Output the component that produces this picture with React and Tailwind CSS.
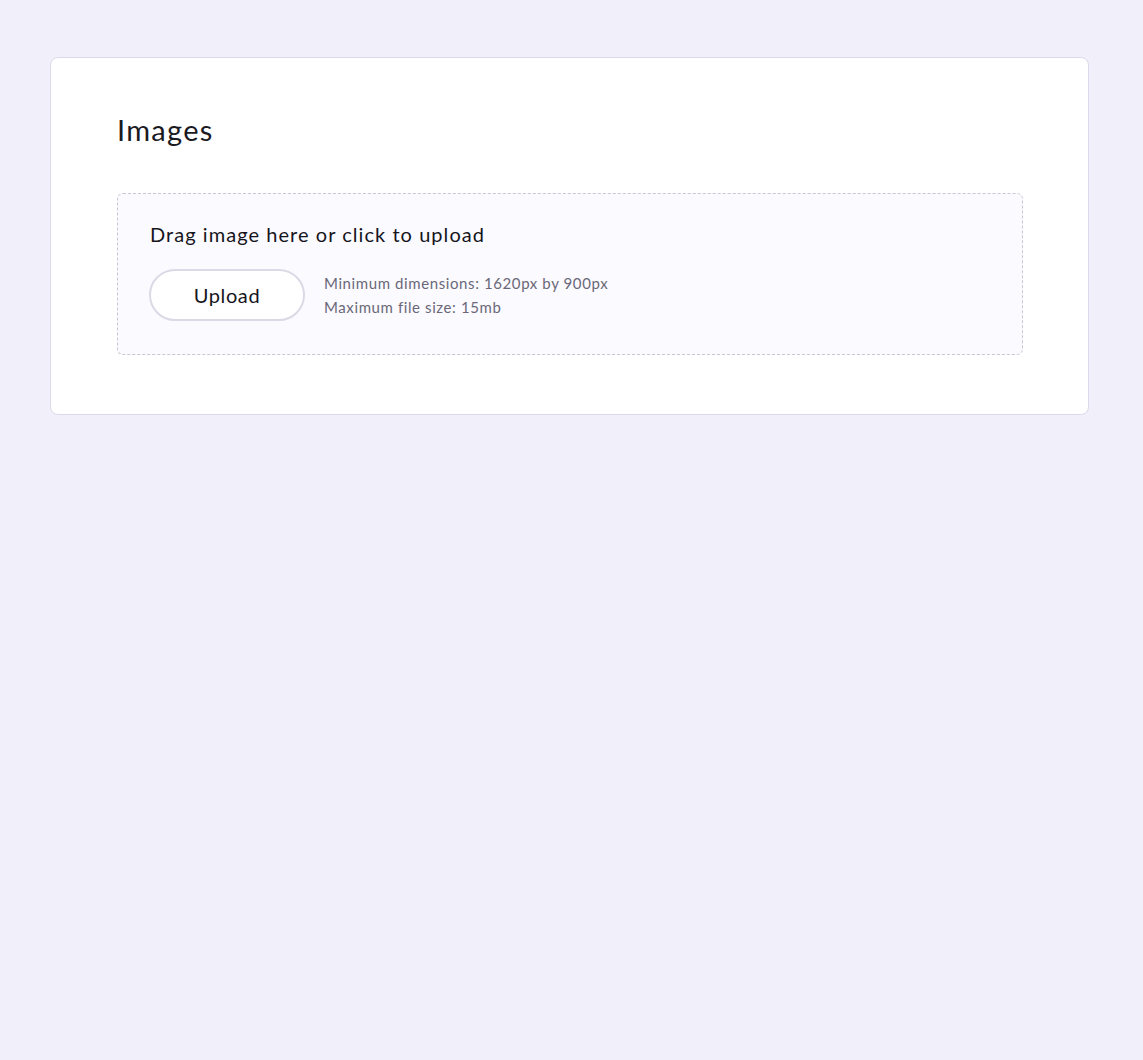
export default function App() {
  return (
    <div className="min-h-[1060px] w-full bg-[#f1effa] pt-[57px] px-[50px]" style={{ fontFamily: 'Lato, "Noto Sans", sans-serif' }}>
      <div className="w-[1039px] rounded-[8px] border border-[#dcd9ea] bg-white pl-[66px] pr-[65px] pt-[52px] pb-[59px]">
        <h1 className="text-[29px] leading-[40px] tracking-[1.3px] text-[#1a1a1f] font-normal">Images</h1>
        <div className="mt-[43px] h-[162px] rounded-[6px] border border-dashed border-[#c9c6d6] bg-[#fbfaff] pl-[32px] pt-[25px]">
          <p className="text-[20px] leading-[30px] tracking-[1.05px] text-[#16151c]">Drag image here or click to upload</p>
          <div className="mt-[20px] -ml-[1px] flex items-center gap-[19px]">
            <button className="h-[52px] w-[156px] rounded-full border-2 border-[#dcd9e6] bg-white text-[20px] tracking-[0.6px] text-[#16151c]">Upload</button>
            <div className="text-[15px] leading-[24px] tracking-[0.6px] text-[#6a6878] -mt-[1px]">
              <div>Minimum dimensions: 1620px by 900px</div>
              <div>Maximum file size: 15mb</div>
            </div>
          </div>
        </div>
      </div>
    </div>
  );
}
